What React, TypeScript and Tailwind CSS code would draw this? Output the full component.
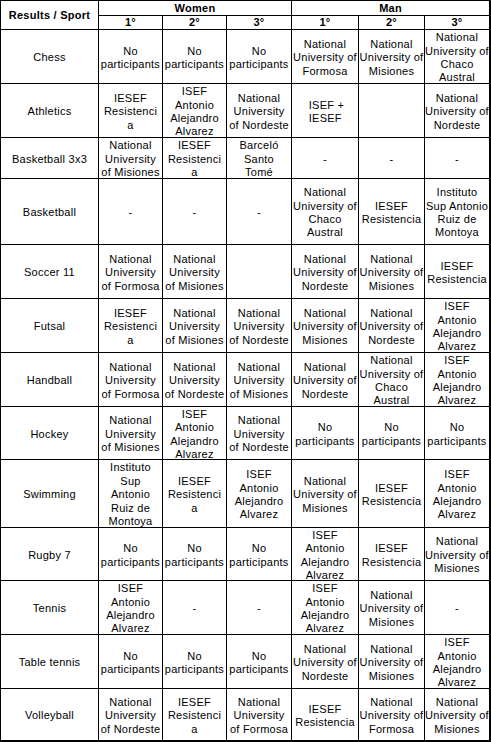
import React from "react";

type Row = { sport: string; cells: string[] };

const NP = "No|participants";
const ISEF = "ISEF|Antonio|Alejandro|Alvarez";
const IESEF_W = "IESEF|Resistenci|a";
const IESEF_M = "IESEF|Resistencia";
const wUni = (s: string) => `National|University|of ${s}`;
const mUni = (s: string) => `National|University of|${s}`;

const rows: Row[] = [
  { sport: "Chess", cells: [NP, NP, NP, mUni("Formosa"), mUni("Misiones"), mUni("Chaco|Austral")] },
  { sport: "Athletics", cells: [IESEF_W, ISEF, wUni("Nordeste"), "@ISEF +|IESEF", "", mUni("Nordeste")] },
  { sport: "Basketball 3x3", cells: [wUni("Misiones"), IESEF_W, "Barceló|Santo|Tomé", "-", "-", "-"] },
  { sport: "Basketball", cells: ["-", "-", "-", mUni("Chaco|Austral"), IESEF_M, "Instituto|Sup Antonio|Ruiz de|Montoya"] },
  { sport: "Soccer 11", cells: [wUni("Formosa"), wUni("Misiones"), "", mUni("Nordeste"), mUni("Misiones"), IESEF_M] },
  { sport: "Futsal", cells: [IESEF_W, wUni("Misiones"), wUni("Nordeste"), mUni("Misiones"), mUni("Nordeste"), ISEF] },
  { sport: "Handball", cells: [wUni("Formosa"), wUni("Nordeste"), wUni("Misiones"), mUni("Nordeste"), mUni("Chaco|Austral"), ISEF] },
  { sport: "Hockey", cells: [wUni("Misiones"), ISEF, wUni("Nordeste"), NP, NP, NP] },
  { sport: "Swimming", cells: ["Instituto|Sup|Antonio|Ruiz de|Montoya", IESEF_W, ISEF, mUni("Misiones"), IESEF_M, ISEF] },
  { sport: "Rugby 7", cells: [NP, NP, NP, ISEF, IESEF_M, mUni("Misiones")] },
  { sport: "Tennis", cells: [ISEF, "-", "-", ISEF, mUni("Misiones"), "-"] },
  { sport: "Table tennis", cells: [NP, NP, NP, mUni("Nordeste"), mUni("Misiones"), ISEF] },
  { sport: "Volleyball", cells: [wUni("Nordeste"), IESEF_W, wUni("Formosa"), IESEF_M, mUni("Formosa"), mUni("Misiones")] },
];

function Cell({ text, className = "" }: { text: string; className?: string }) {
  const left = text.startsWith("@");
  const t = left ? text.slice(1) : text;
  const lines = t ? t.split("|") : [];
  return (
    <div className={`bg-white flex items-center justify-center text-center pt-[3px] overflow-visible ${className}`}>
      <div className={left ? "text-left pl-[3px]" : ""}>
        {lines.map((l, i) => (
          <div key={i} className="whitespace-nowrap">
            {l}
          </div>
        ))}
      </div>
    </div>
  );
}

export default function App() {
  return (
    <div className="w-[491px] h-[742px] bg-white font-['Liberation_Sans',Arial,sans-serif] text-[11px] leading-[13.4px] tracking-[0.25px] text-black">
      <div className="grid grid-cols-[97px_63px_63px_64px_66px_65px_64px] grid-rows-[14px_13px_53px_53px_40px_65px_53px_53px_53px_52px_67px_52px_53px_53px_51px] gap-px bg-black pt-px pl-px pr-[2px] pb-[2px] w-[491px] h-[742px]">
        <div className="row-span-2 bg-white flex items-center justify-center font-bold pt-[2px]">Results / Sport</div>
        <div className="col-span-3 bg-white flex items-center justify-center font-bold pt-[1px]">Women</div>
        <div className="col-span-3 bg-white flex items-center justify-center font-bold pt-[1px]">Man</div>
        {["1°", "2°", "3°", "1°", "2°", "3°"].map((h, i) => (
          <div key={i} className="bg-white flex items-center justify-center font-bold pt-[1px]">
            {h}
          </div>
        ))}
        {rows.map((r) => (
          <React.Fragment key={r.sport}>
            <Cell text={r.sport} />
            {r.cells.map((c, i) => (
              <Cell key={i} text={c} />
            ))}
          </React.Fragment>
        ))}
      </div>
    </div>
  );
}
